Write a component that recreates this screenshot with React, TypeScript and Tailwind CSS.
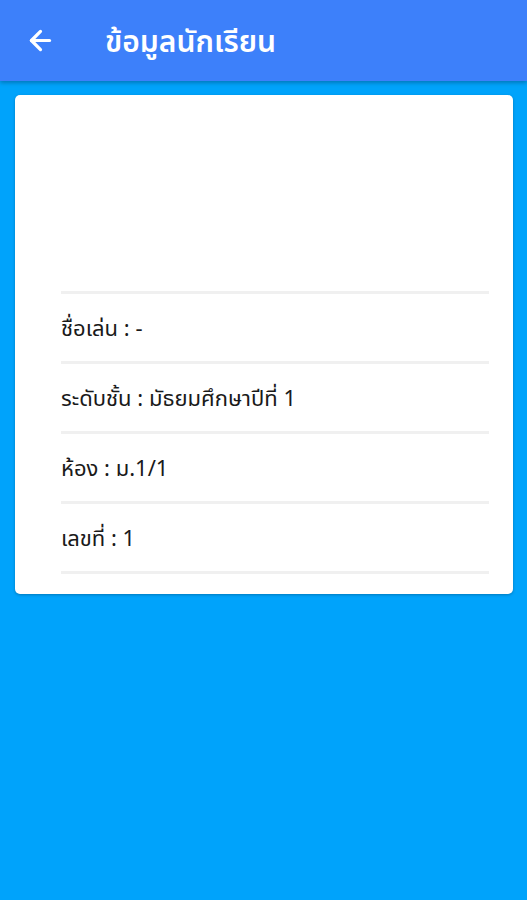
import { ArrowLeft } from "lucide-react";

const ROWS = [
  "ชื่อเล่น : -",
  "ระดับชั้น : มัธยมศึกษาปีที่ 1",
  "ห้อง : ม.1/1",
  "เลขที่ : 1",
];

export default function App() {
  return (
    <div
      className="min-h-[900px] bg-[#00a3fb]"
      style={{ fontFamily: '"Noto Sans", "Noto Sans Thai", sans-serif' }}
    >
      <header className="relative z-10 flex h-[81px] items-center bg-[#3d80fa] shadow-[0_2px_4px_rgba(0,0,0,0.25)]">
        <ArrowLeft className="ml-[25px] h-[31px] w-[31px] text-white" strokeWidth={2.5} />
        <h1 className="ml-[49px] text-[30px] font-semibold text-white">ข้อมูลนักเรียน</h1>
      </header>

      <div className="pl-[15px] pr-[14px] pt-[14px]">
        <div className="rounded-[5px] bg-white pb-[20px] pt-[196px] shadow-[0_1px_3px_rgba(0,0,0,0.25)]">
          <div className="ml-[46px] mr-[24px] border-t-[3px] border-[#f0f0f0]">
            {ROWS.map((row) => (
              <div
                key={row}
                className="flex h-[70px] items-center border-b-[3px] border-[#f0f0f0] text-[22px] text-[#1a1a1a]"
              >
                {row}
              </div>
            ))}
          </div>
        </div>
      </div>
    </div>
  );
}
